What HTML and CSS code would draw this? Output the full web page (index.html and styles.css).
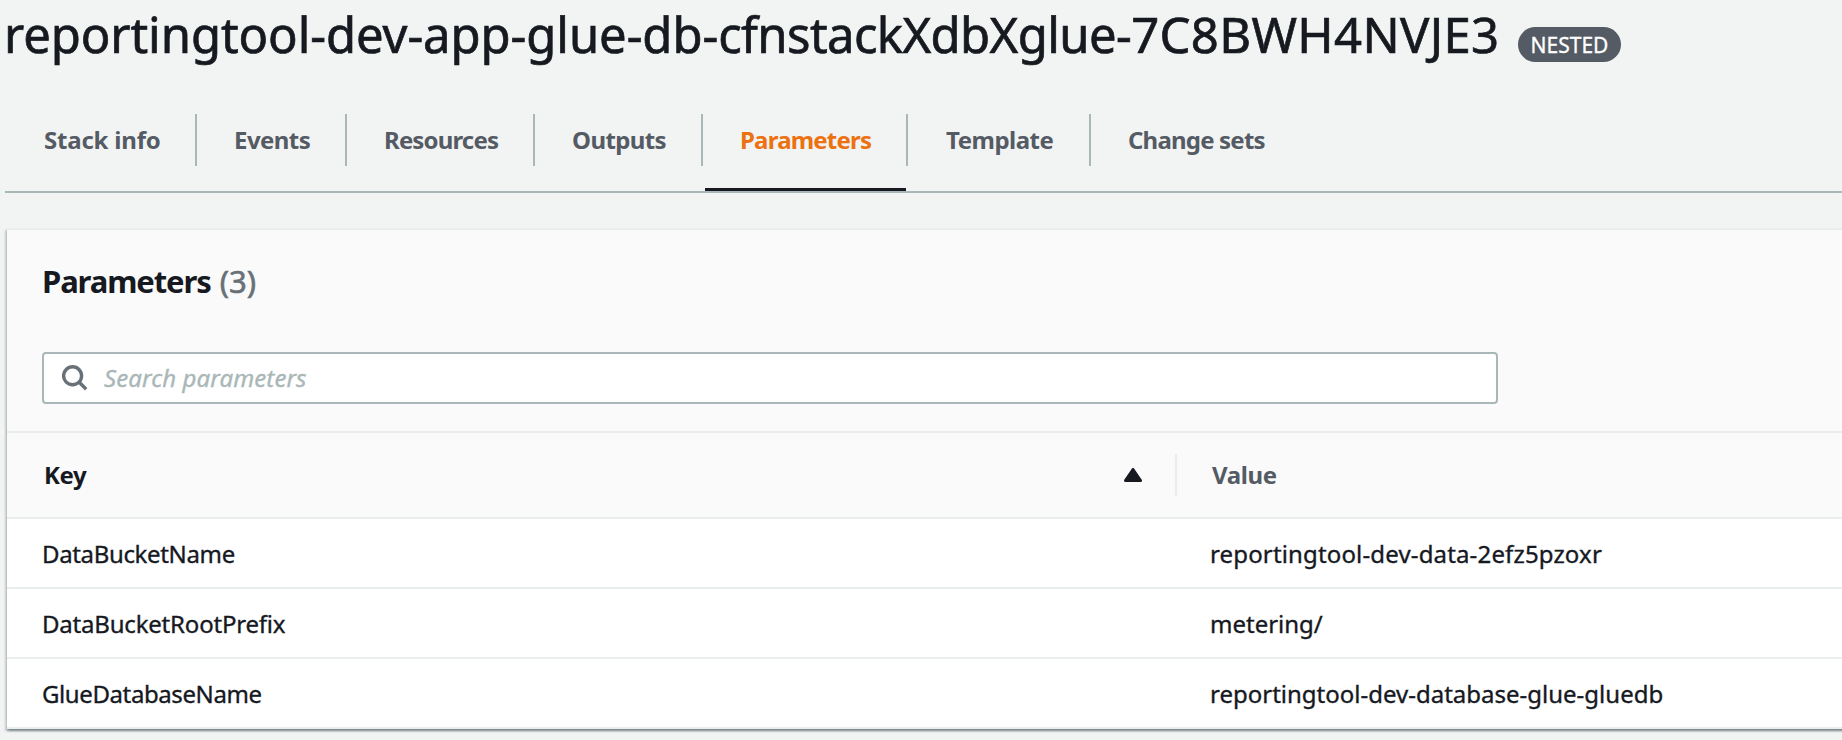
FILE: index.html
```
<!DOCTYPE html>
<html lang="en">
<head>
<meta charset="utf-8">
<title>Stack parameters</title>
<link rel="stylesheet" href="styles.css">
</head>
<body>
<header class="page-header">
  <h1 class="page-title">reportingtool-dev-app-glue-db-<span class="title-stack">cfnstackXdbXglue-</span><span class="title-id">7C8BWH4NVJE3</span></h1>
  <span class="badge">NESTED</span>
</header>
<nav class="tabs">
  <a class="tab tab-info">Stack info</a>
  <a class="tab tab-events">Events</a>
  <a class="tab tab-resources">Resources</a>
  <a class="tab tab-outputs">Outputs</a>
  <a class="tab tab-active">Parameters</a>
  <a class="tab tab-template">Template</a>
  <a class="tab tab-changes">Change sets</a>
</nav>
<main class="panel">
  <div class="panel-header">
    <h2 class="panel-title"><span class="panel-name">Parameters</span> <span class="count">(3)</span></h2>
    <div class="search">
      <svg class="search-icon" width="26" height="26" viewBox="0 0 26 26"><circle cx="10.6" cy="10.8" r="9"/><path d="M17 17l7.2 7.2"/></svg>
      <span class="placeholder">Search parameters</span>
    </div>
  </div>
  <div class="row row-head">
    <div class="cell cell-key"><span>Key</span>
      <svg class="sort" width="18" height="14" viewBox="0 0 18 14"><path d="M9 1.5L16.5 12.5H1.5Z"/></svg>
    </div>
    <div class="cell cell-value">Value</div>
  </div>
  <div class="row"><div class="cell key-bucket">DataBucketName</div><div class="cell value-bucket">reportingtool-dev-data-2efz5pzoxr</div></div>
  <div class="row"><div class="cell key-prefix">DataBucketRootPrefix</div><div class="cell">metering/</div></div>
  <div class="row"><div class="cell key-glue">GlueDatabaseName</div><div class="cell">reportingtool-dev-database-glue-gluedb</div></div>
</main>
</body>
</html>
```
FILE: styles.css
```
* { box-sizing: border-box; }
body { margin: 0; height: 740px; overflow: hidden; background: #f2f3f3; color: #16191f; font: 24px/30px "Noto Sans", "Open Sans", sans-serif; }

.page-header { display: flex; height: 68px; padding-left: 4px; }
.page-title { flex: none; width: 1500px; margin: 0; font-size: 49px; line-height: 68px; font-weight: 400; letter-spacing: -.08px; white-space: nowrap; -webkit-text-stroke: .7px; }
.title-stack { letter-spacing: -.6px; }
.title-id { letter-spacing: .35px; }
.badge { flex: none; width: 103px; margin: 27px 0 0 14px; height: 35px; border-radius: 17.5px; background: #545b64; color: #fff; font-size: 21px; line-height: 36px; text-align: center; -webkit-text-stroke: .3px; }

.tabs { display: grid; grid-template-columns: 192px 150px 188px 168px 205px 183px auto; margin: 46px 0 0 5px; height: 79px; border-bottom: 2px solid #aab7b8; }
.tab { position: relative; height: 52px; padding-left: 37px; border-right: 2px solid #aab7b8; color: #545b64; font-weight: 700; line-height: 52px; white-space: nowrap; }
.tab:last-child { border-right: 0; }
.tab-info { padding-left: 39px; letter-spacing: -.2px; }
.tab-events { letter-spacing: -.55px; }
.tab-resources { letter-spacing: -.85px; }
.tab-outputs { letter-spacing: -.6px; }
.tab-active { padding-left: 37px; color: #ec7211; letter-spacing: -.8px; }
.tab-active::after { content: ""; position: absolute; left: 2px; right: 0; top: 74px; height: 3px; background: #16191f; }
.tab-template { padding-left: 38px; letter-spacing: -.5px; }
.tab-changes { letter-spacing: -.8px; }

.panel { margin: 35px -10px 0 7px; height: 501px; border-top: 2px solid #eaeded; background: #fff; box-shadow: 0 2px 2px 0 rgba(0, 28, 36, .3), 2px 2px 2px 0 rgba(0, 28, 36, .15), -2px 2px 2px 0 rgba(0, 28, 36, .15); }
.panel-header { height: 203px; padding: 29px 0 0 35px; border-bottom: 2px solid #eaeded; background: #fafafa; }
.panel-title { margin: 0; font-size: 31px; line-height: 44px; }
.panel-name { letter-spacing: -1.1px; }
.count { margin-left: 1px; color: #687078; font-weight: 400; -webkit-text-stroke: .6px; }
.search { display: flex; align-items: center; gap: 16px; width: 1456px; height: 52px; margin-top: 49px; padding-left: 18px; border: 2px solid #aab7b8; border-radius: 4px; background: #fff; }
.search-icon { fill: none; stroke: #687078; stroke-width: 3.4; }
.placeholder { color: #aab7b8; font-style: italic; letter-spacing: .1px; -webkit-text-stroke: .35px; }

.row { display: grid; grid-template-columns: 1168px 1fr; height: 70px; border-bottom: 2px solid #eaeded; }
.cell { padding: 20px 0 0 35px; white-space: nowrap; -webkit-text-stroke: .35px; }
.row-head { height: 86px; background: #fafafa; font-weight: 700; align-items: center; }
.row-head .cell { display: flex; align-items: center; justify-content: space-between; height: 42px; padding: 0 33px 0 37px; letter-spacing: -.4px; -webkit-text-stroke: 0; }
.row-head .cell-value { padding-left: 35px; color: #545b64; border-left: 2px solid #eaeded; }
.sort { fill: #16191f; stroke: #16191f; stroke-width: 3; stroke-linejoin: round; }
.key-bucket { letter-spacing: -.35px; }
.key-prefix { letter-spacing: -.2px; }
.key-glue { letter-spacing: -.4px; }
.value-bucket { letter-spacing: .15px; }
```
